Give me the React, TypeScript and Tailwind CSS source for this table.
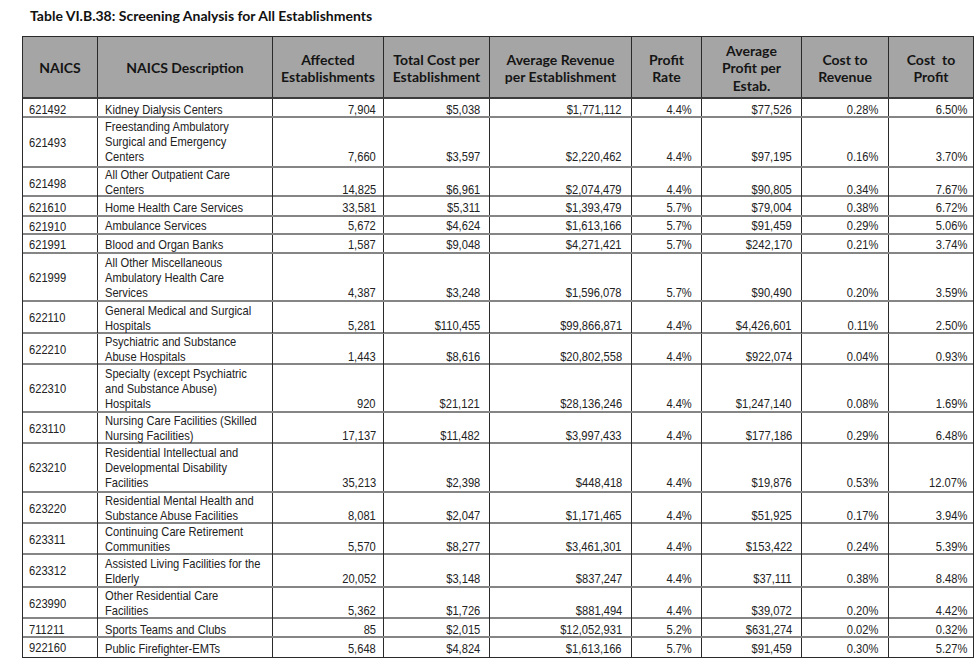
import React from "react";

type Row = {
  code: string;
  desc: string[];
  vals: string[];
  h: string;
  s: string;
};

const rows: Row[] = [
  { code: "621492", desc: ["Kidney Dialysis Centers"], vals: ["7,904", "$5,038", "$1,771,112", "4.4%", "$77,526", "0.28%", "6.50%"], h: "h-[19px]", s: "translate-y-[1.5px]" },
  { code: "621493", desc: ["Freestanding Ambulatory", "Surgical and Emergency", "Centers"], vals: ["7,660", "$3,597", "$2,220,462", "4.4%", "$97,195", "0.16%", "3.70%"], h: "h-[50px]", s: "translate-y-[-1px]" },
  { code: "621498", desc: ["All Other Outpatient Care", "Centers"], vals: ["14,825", "$6,961", "$2,074,479", "4.4%", "$90,805", "0.34%", "7.67%"], h: "h-[29px]", s: "translate-y-[-1.5px]" },
  { code: "621610", desc: ["Home Health Care Services"], vals: ["33,581", "$5,311", "$1,393,479", "5.7%", "$79,004", "0.38%", "6.72%"], h: "h-[20px]", s: "translate-y-[0.5px]" },
  { code: "621910", desc: ["Ambulance Services"], vals: ["5,672", "$4,624", "$1,613,166", "5.7%", "$91,459", "0.29%", "5.06%"], h: "h-[18px]", s: "translate-y-[1px]" },
  { code: "621991", desc: ["Blood and Organ Banks"], vals: ["1,587", "$9,048", "$4,271,421", "5.7%", "$242,170", "0.21%", "3.74%"], h: "h-[19px]", s: "translate-y-[0.5px]" },
  { code: "621999", desc: ["All Other Miscellaneous", "Ambulatory Health Care", "Services"], vals: ["4,387", "$3,248", "$1,596,078", "5.7%", "$90,490", "0.20%", "3.59%"], h: "h-[48px]", s: "translate-y-[1px]" },
  { code: "622110", desc: ["General Medical and Surgical", "Hospitals"], vals: ["5,281", "$110,455", "$99,866,871", "4.4%", "$4,426,601", "0.11%", "2.50%"], h: "h-[32px]", s: "translate-y-[0.5px]" },
  { code: "622210", desc: ["Psychiatric and Substance", "Abuse Hospitals"], vals: ["1,443", "$8,616", "$20,802,558", "4.4%", "$922,074", "0.04%", "0.93%"], h: "h-[31px]", s: "translate-y-[-0.5px]" },
  { code: "622310", desc: ["Specialty (except Psychiatric", "and Substance Abuse)", "Hospitals"], vals: ["920", "$21,121", "$28,136,246", "4.4%", "$1,247,140", "0.08%", "1.69%"], h: "h-[48px]", s: "translate-y-[0.5px]" },
  { code: "623110", desc: ["Nursing Care Facilities (Skilled", "Nursing Facilities)"], vals: ["17,137", "$11,482", "$3,997,433", "4.4%", "$177,186", "0.29%", "6.48%"], h: "h-[31px]", s: "translate-y-[-0.5px]" },
  { code: "623210", desc: ["Residential Intellectual and", "Developmental Disability", "Facilities"], vals: ["35,213", "$2,398", "$448,418", "4.4%", "$19,876", "0.53%", "12.07%"], h: "h-[49px]", s: "translate-y-0" },
  { code: "623220", desc: ["Residential Mental Health and", "Substance Abuse Facilities"], vals: ["8,081", "$2,047", "$1,171,465", "4.4%", "$51,925", "0.17%", "3.94%"], h: "h-[31px]", s: "translate-y-[-0.5px]" },
  { code: "623311", desc: ["Continuing Care Retirement", "Communities"], vals: ["5,570", "$8,277", "$3,461,301", "4.4%", "$153,422", "0.24%", "5.39%"], h: "h-[31px]", s: "translate-y-[-0.5px]" },
  { code: "623312", desc: ["Assisted Living Facilities for the", "Elderly"], vals: ["20,052", "$3,148", "$837,247", "4.4%", "$37,111", "0.38%", "8.48%"], h: "h-[33px]", s: "translate-y-[1px]" },
  { code: "623990", desc: ["Other Residential Care", "Facilities"], vals: ["5,362", "$1,726", "$881,494", "4.4%", "$39,072", "0.20%", "4.42%"], h: "h-[31px]", s: "translate-y-[-0.5px]" },
  { code: "711211", desc: ["Sports Teams and Clubs"], vals: ["85", "$2,015", "$12,052,931", "5.2%", "$631,274", "0.02%", "0.32%"], h: "h-[19px]", s: "translate-y-[1.5px]" },
  { code: "922160", desc: ["Public Firefighter-EMTs"], vals: ["5,648", "$4,824", "$1,613,166", "5.7%", "$91,459", "0.30%", "5.27%"], h: "h-[19px]", s: "translate-y-[-0.5px]" },
];

const cols = "grid grid-cols-[75px_175px_111px_106px_142px_70px_100px_87px_84px]";

const valPad = ["pr-[7px]", "pr-[9px]", "pr-[9px]", "pr-[9px]", "pr-[9px]", "pr-[10px]", "pr-[6px]"];

const headers: string[][] = [
  ["NAICS"],
  ["NAICS Description"],
  ["Affected", "Establishments"],
  ["Total Cost per", "Establishment"],
  ["Average Revenue", "per Establishment"],
  ["Profit", "Rate"],
  ["Average", "Profit per", "Estab."],
  ["Cost to", "Revenue"],
  ["Cost  to", "Profit"],
];

export default function App() {
  return (
    <div className="w-[980px] h-[665px] bg-white pl-[22px] pt-[6px]">
      <div className="pl-[8px] h-[20px] leading-[20px] text-[14px] font-bold text-[#111] font-['Lato','Liberation_Sans',sans-serif]">
        Table VI.B.38: Screening Analysis for All Establishments
      </div>
      <div className="mt-[10px] w-[952px] border border-[#2a2a2a] font-['Liberation_Sans',sans-serif] text-[13.5px] leading-[15px] text-[#222]">
        <div className={`${cols} h-[62px] bg-[#a5a5a5] border-b-2 border-[#3c3c3c]`}>
          {headers.map((h, i) => (
            <div
              key={i}
              className={`flex flex-col items-center justify-center pt-[2px] text-center font-['Lato','Liberation_Sans',sans-serif] font-bold text-[14px] leading-[17.5px] text-[#151515] ${i < 8 ? "border-r border-[#2a2a2a]" : ""}`}
            >
              {h.map((l, j) => (
                <div key={j} className="whitespace-pre">{l}</div>
              ))}
            </div>
          ))}
        </div>
        {rows.map((r, ri) => {
          const codeShift = r.desc.length === 1 ? r.s : "translate-y-0";
          return (
            <div
              key={r.code}
              className={`${cols} ${r.h} ${ri < rows.length - 1 ? "border-b-2 border-[#858585]" : ""}`}
            >
              <div className="flex items-center pl-[6px] border-r border-[#2a2a2a]">
                <span className={`inline-block origin-left scale-x-[0.825] ${codeShift}`}>{r.code}</span>
              </div>
              <div className="flex flex-col items-start justify-end pb-[1px] pl-[7px] border-r border-[#2a2a2a]">
                {r.desc.map((d, j) => (
                  <span key={j} className={`block shrink-0 whitespace-nowrap origin-left scale-x-[0.825] ${r.s}`}>{d}</span>
                ))}
              </div>
              {r.vals.map((v, vi) => (
                <div
                  key={vi}
                  className={`flex items-end justify-end pb-[1px] ${valPad[vi]} ${vi < 6 ? "border-r border-[#2a2a2a]" : ""}`}
                >
                  <span className={`inline-block origin-right scale-x-[0.825] ${r.s}`}>{v}</span>
                </div>
              ))}
            </div>
          );
        })}
      </div>
    </div>
  );
}
